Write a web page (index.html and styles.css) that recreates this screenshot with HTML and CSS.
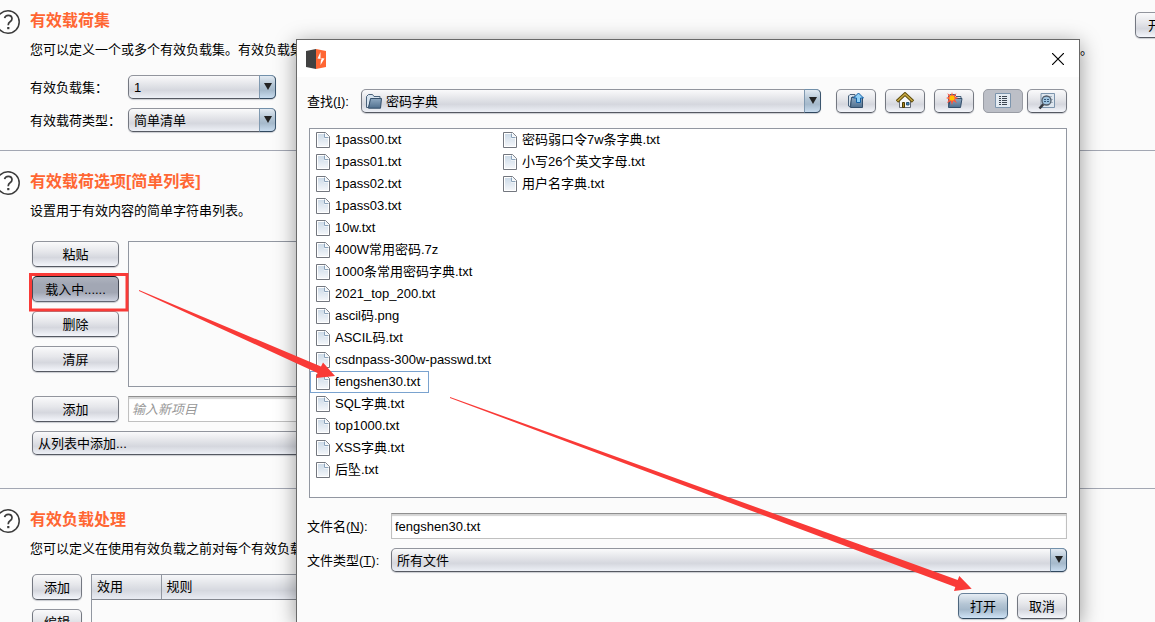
FILE: index.html
```html
<!DOCTYPE html>
<html lang="zh-CN">
<head>
<meta charset="utf-8">
<title>有效载荷</title>
<link rel="stylesheet" href="styles.css">
</head>
<body>
<svg class="defs" width="0" height="0" aria-hidden="true">
  <defs>
    <linearGradient id="paper" x1="0" y1="0" x2="0" y2="1"><stop offset="0" stop-color="#cddbe8"/><stop offset="1" stop-color="#f2f5f9"/></linearGradient>
    <linearGradient id="blue" x1="0" y1="0" x2="0" y2="1"><stop offset="0" stop-color="#8fa9c2"/><stop offset="1" stop-color="#4f6f8e"/></linearGradient>
    <symbol id="help" viewBox="0 0 24 24"><circle cx="12" cy="12" r="11.2" fill="#fff" stroke="#3c3c3c" stroke-width="1.5"/><path d="M8.600 8.200Q9.200 5.300 12.300 5.300Q16 5.300 16 8.700Q16 10.400 14 11.800Q12.200 13 12.200 15.200" fill="none" stroke="#3c3c3c" stroke-width="1.700"/><rect x="11.200" y="17" width="2.200" height="2.200" fill="#3c3c3c"/></symbol>
    <symbol id="file" viewBox="0 0 14 16"><path d="M.5.5H9.500L13.500 4.500V15.500H.5Z" fill="#fff" stroke="#73777f"/><path d="M2 2H8V6.500H12V14H2Z" fill="url(#paper)"/><path d="M8.500 1.500V5.500H12.500" fill="none" stroke="#8aa2ba"/><path d="M9.500 1V4.500H13Z" fill="#eef3f8"/></symbol>
    <symbol id="folder" viewBox="0 0 16 16"><path d="M.5 14.500V3.500L2.500 1.500H6.500L8 3.500H14V6H5L2.500 14.500Z" fill="#d6e3ef" stroke="#49617a"/><path d="M4.500 5.500H15.500L14.500 15.200H2.500Z" fill="url(#blue)" stroke="#344f6b"/></symbol>
  </defs>
</svg>
<main class="page">
  <section class="section">
    <svg class="help"><use href="#help"/></svg>
    <div class="content">
      <h2>有效载荷集</h2>
      <p class="desc split"><span>您可以定义一个或多个有效负载集。有效负载集</span><span>。</span></p>
      <div class="form">
        <label for="set">有效负载集：</label>
        <span class="combo"><select id="set"><option>1</option></select></span>
        <label for="type">有效载荷类型：</label>
        <span class="combo"><select id="type"><option>简单清单</option></select></span>
      </div>
    </div>
    <button class="btn start" type="button">开</button>
  </section>
  <section class="section">
    <svg class="help"><use href="#help"/></svg>
    <div class="content">
      <h2>有效载荷选项[简单列表]</h2>
      <p class="desc">设置用于有效内容的简单字符串列表。</p>
      <div class="options">
        <div class="stack">
          <button class="btn" type="button">粘贴</button>
          <button class="btn pressed" type="button">载入中......</button>
          <button class="btn" type="button">删除</button>
          <button class="btn" type="button">清屏</button>
        </div>
        <div class="listbox"></div>
        <button class="btn" type="button">添加</button>
        <input class="field" type="text" placeholder="输入新项目" aria-label="输入新项目">
        <span class="combo wide"><select aria-label="从列表中添加"><option>从列表中添加...</option></select></span>
      </div>
    </div>
  </section>
  <section class="section">
    <svg class="help"><use href="#help"/></svg>
    <div class="content">
      <h2>有效负载处理</h2>
      <p class="desc">您可以定义在使用有效负载之前对每个有效负载</p>
      <div class="rules">
        <div class="stack">
          <button class="btn" type="button">添加</button>
          <button class="btn" type="button">编辑</button>
        </div>
        <div class="rulebox"><table><thead><tr><th class="used">效用</th><th>规则</th></tr></thead></table></div>
      </div>
    </div>
  </section>
</main>

<div class="dialog" role="dialog" aria-label="打开">
  <header class="titlebar">
    <svg width="20" height="20" viewBox="0 0 20 20"><path d="M0 2L10 0V20L0 18Z" fill="#414141"/><path d="M10 0L20 2V18L10 20Z" fill="#ff6633"/><path d="M14.500 3L11.500 9.500L15 10L14.500 16L18.500 9.500L14.500 9Z" fill="#fff"/><path d="M14 9.500H16L14.500 12Z" fill="#ff6633"/></svg>
    <button class="close" type="button" aria-label="关闭"><svg width="12" height="12" viewBox="0 0 12 12"><path d="M0 0L12 12M12 0L0 12" stroke="#000" stroke-width="1.200"/></svg></button>
  </header>
  <div class="chooser">
    <div class="lookup">
      <label for="dir">查找(<u>I</u>):</label>
      <span class="combo dir"><svg class="diricon"><use href="#folder"/></svg><select id="dir"><option>密码字典</option></select></span>
      <div class="tools">
        <button class="btn tool" type="button" aria-label="上一级"><svg width="18" height="18" viewBox="0 0 18 18"><path d="M1.500 14V4L3 2.500H8V5H5L3 15Z" fill="#d6e3ef" stroke="#49617a"/><path d="M4.500 5.500H15.500V15.500H3.500Z" fill="url(#blue)" stroke="#344f6b"/><path d="M11.500 1L16.500 6H13.500V10.500H9.500V6H6.500Z" fill="#8fd0f7" stroke="#1460a5"/></svg></button>
        <button class="btn tool" type="button" aria-label="主目录"><svg width="18" height="18" viewBox="0 0 18 18"><path d="M3.500 8.500L9 3L14.500 8.500V15.500H3.500Z" fill="#f7f8fa" stroke="#656b76"/><path d="M1 9.500L9 2L17 9.500" fill="none" stroke="#5c4a08" stroke-width="3.400"/><path d="M1.500 9L9 2L16.500 9" fill="none" stroke="#c9aa45" stroke-width="1.600"/><path d="M6.500 10.500H8.500V15.500H6.500Z" fill="#a98618" stroke="#4b3b05"/><path d="M10.500 10.500H13V13H10.500Z" fill="#3e86bc" stroke="#315775"/></svg></button>
        <button class="btn tool" type="button" aria-label="新建文件夹"><svg width="18" height="18" viewBox="0 0 18 18"><path d="M3.500 15V4L5 2.500H10L11 4.500H16V7H5Z" fill="#d6e3ef" stroke="#49617a"/><path d="M5.500 6.500H17L15.500 15.500H3.500Z" fill="url(#blue)" stroke="#344f6b"/><path d="M7 0L8 3.600L11.500 1.200L9.900 4.700L13.500 6L9.900 7.300L12 11.200L8.300 8.900L7 13L5.700 8.900L2 11.200L4 7.300L1 6L4 4.700L2.300 1.200L6 3.600Z" fill="#ff563d"/><circle cx="7" cy="6" r="2.600" fill="#ffc400"/></svg></button>
        <button class="btn tool on" type="button" aria-label="列表"><svg width="16" height="16" viewBox="0 0 16 16"><path d="M.5.5H15.500V14.500H.5Z" fill="#e4ebf2" stroke="#7d95ad"/><path d="M4 3.500H6M7 3.500H12M4 5.500H6M7 5.500H12M4 7.500H6M7 7.500H12M4 9.500H6M7 9.500H12M4 11.500H6M7 11.500H12" stroke="#3d4651"/></svg></button>
        <button class="btn tool last" type="button" aria-label="详细信息"><svg width="18" height="18" viewBox="0 0 18 18"><path d="M3 1.500H16.500V15.500H3Z" fill="#dfe7ef" stroke="#7d95ad"/><path d="M5 4.500H14M13 7.500H15M13 10.500H15" stroke="#a9b7c5"/><path d="M5.500 12L1.500 16.500" stroke="#363a40" stroke-width="2.600"/><circle cx="8.500" cy="8.500" r="4.500" fill="#9fc4e0" stroke="#525d6a" stroke-width="1.300"/><path d="M6 7.500H8M9 7.500H11M6 9.500H8M9 9.500H11" stroke="#365a7b"/></svg></button>
      </div>
    </div>
    <ul class="files">
      <li><svg><use href="#file"/></svg>1pass00.txt</li>
      <li><svg><use href="#file"/></svg>1pass01.txt</li>
      <li><svg><use href="#file"/></svg>1pass02.txt</li>
      <li><svg><use href="#file"/></svg>1pass03.txt</li>
      <li><svg><use href="#file"/></svg>10w.txt</li>
      <li><svg><use href="#file"/></svg>400W常用密码.7z</li>
      <li><svg><use href="#file"/></svg>1000条常用密码字典.txt</li>
      <li><svg><use href="#file"/></svg>2021_top_200.txt</li>
      <li><svg><use href="#file"/></svg>ascil码.png</li>
      <li><svg><use href="#file"/></svg>ASCIL码.txt</li>
      <li><svg><use href="#file"/></svg>csdnpass-300w-passwd.txt</li>
      <li class="selected"><svg><use href="#file"/></svg>fengshen30.txt</li>
      <li><svg><use href="#file"/></svg>SQL字典.txt</li>
      <li><svg><use href="#file"/></svg>top1000.txt</li>
      <li><svg><use href="#file"/></svg>XSS字典.txt</li>
      <li><svg><use href="#file"/></svg>后坠.txt</li>
      <li><svg><use href="#file"/></svg>密码弱口令7w条字典.txt</li>
      <li><svg><use href="#file"/></svg>小写26个英文字母.txt</li>
      <li><svg><use href="#file"/></svg>用户名字典.txt</li>
    </ul>
    <div class="names">
      <label for="fname">文件名(<u>N</u>):</label>
      <input class="field" id="fname" type="text" value="fengshen30.txt">
      <label for="ftype">文件类型(<u>T</u>):</label>
      <span class="combo"><select id="ftype"><option>所有文件</option></select></span>
    </div>
    <div class="actions">
      <button class="btn primary" type="button">打开</button>
      <button class="btn" type="button">取消</button>
    </div>
  </div>
</div>

<svg class="marks" aria-hidden="true">
  <rect x="30.500" y="274.500" width="96.500" height="35.500" fill="none" stroke="#f93a37" stroke-width="3"/>
  <path d="M139 290L321 366.500L323 362.500L335 376L316 378L317.500 373L139 291Z" fill="#f93a37"/>
  <path d="M450 397L860 544.500L957.700 580L959.300 576L971.700 588.700L954 591L955.300 587L860 551.500L450 398Z" fill="#f93a37"/>
</svg>
</body>
</html>
```
FILE: styles.css
```css
*, *::before, *::after { box-sizing: border-box; }

body {
  margin: 0;
  height: 100vh;
  overflow: hidden;
  position: relative;
  background: #fbfbfb;
  color: #000;
  font: 13px/20px "Liberation Sans", "Noto Sans CJK SC", sans-serif;
}

button, input, select { font: inherit; color: inherit; margin: 0; }
.defs { position: absolute; }

/* Payload page */
.page { height: 100%; overflow: hidden; }
.section {
  display: grid;
  grid-template-columns: 30px 1fr 20px;
  padding: 20px 0 33px;
  border-bottom: 1px solid #a3a7b3;
}
.section:first-child { padding: 10px 0 18px; }
.section:last-child { border: 0; }
.help { width: 24px; height: 24px; margin-left: -4px; }
h2 { margin: 0 0 7px; font-size: 16px; line-height: 22px; font-weight: 700; color: #ff6633; }
.desc { margin: 0; line-height: 22px; white-space: nowrap; }
.split { display: flex; justify-content: space-between; padding-right: 42px; }

.form {
  display: grid;
  grid-template-columns: 98px 148px;
  gap: 9px 0;
  align-items: center;
  margin-top: 14px;
}
.options {
  display: grid;
  grid-template-columns: 87px 1fr;
  gap: 9px;
  margin: 19px 100px 0 2px;
}
.stack { display: flex; flex-direction: column; gap: 9px; }
.listbox { border: 1px solid #9297a1; min-height: 146px; }
.wide { grid-column: 1 / -1; }

.rules {
  display: grid;
  grid-template-columns: 50px 1fr;
  gap: 9px;
  margin: 14px 100px 0 2px;
}
.rulebox { border: 1px solid #9297a1; min-height: 80px; }
.rulebox table { width: 100%; border-collapse: collapse; }
.rulebox th {
  height: 24px;
  padding: 0 5px;
  text-align: left;
  font-weight: 400;
  background: linear-gradient(#f6f7f9, #dfe1e6 45%, #d5d8df 65%, #e9ecf3);
  border-bottom: 1px solid #83878f;
}
.rulebox .used { width: 69px; border-right: 1px solid #9297a1; }

/* Controls */
.form label, .lookup label, .names label { padding-top: 2px; }
.btn {
  height: 26px;
  padding: 2px 0 0;
  border: 1px solid;
  border-color: #92959d #747881 #555962;
  border-radius: 5px;
  background: linear-gradient(#fafafb, #e6e7eb 40%, #d5d7de 65%, #f4f6fb);
  box-shadow: 0 1px 1px #c9cbd0;
  line-height: 20px;
  white-space: nowrap;
}
.start { width: 87px; margin-top: 2px; padding-left: 12px; text-align: left; }
.pressed {
  border-color: #17191f #454a55 #626773;
  background: linear-gradient(#aeb3bf, #a2a7b4 30%, #a2a7b4 65%, #ccd1df);
}
.primary {
  border-color: #68819a #4c657d #2f475e;
  background: linear-gradient(#e6edf4, #b4c5d4 42%, #a5b9cb 65%, #cfe3f6);
}

.combo { position: relative; display: block; height: 24px; }
.combo select {
  display: block;
  width: 100%;
  height: 24px;
  padding: 2px 22px 0 5px;
  appearance: none;
  border: 1px solid;
  border-color: #92959d #747881 #555962;
  border-radius: 5px;
  background: linear-gradient(#fafafb, #e6e7eb 35%, #d5d7de 65%, #edf0f6);
  box-shadow: 0 1px 1px #c9cbd0;
  line-height: 20px;
}
.combo::before {
  content: "";
  position: absolute;
  top: 0;
  right: 0;
  width: 17px;
  height: 24px;
  border: 1px solid;
  border-color: #7290aa #3b566f #2f475e #8099b0;
  border-radius: 0 5px 5px 0;
  background: linear-gradient(#e2eaf2, #b2c4d4 42%, #a5b9cb 65%, #c8dcef);
  pointer-events: none;
}
.combo::after {
  content: "";
  position: absolute;
  top: 8px;
  right: 4px;
  border: 4px solid transparent;
  border-top: 7px solid #222;
  border-bottom: 0;
  pointer-events: none;
}

.field {
  width: 100%;
  height: 26px;
  padding: 0 3px;
  border: 1px solid #c0c0c0;
  border-top: 1px solid #8f8f8f;
  border-radius: 0;
  background: #fff;
  box-shadow: inset 0 2px 1px #d4d4d4;
}
.field::placeholder { color: #999; font-style: italic; opacity: 1; }

/* File chooser window */
.dialog {
  position: absolute;
  top: 39px;
  left: 296px;
  right: 75px;
  bottom: 0;
  border: 1px solid #696969;
  border-bottom: 0;
  background: #fbfbfb;
  box-shadow: 0 4px 20px rgba(0, 0, 0, .4);
}
.titlebar {
  display: flex;
  align-items: center;
  justify-content: space-between;
  height: 37px;
  padding: 0 9px;
  background: #fff;
}
.titlebar svg { display: block; }
.close { padding: 6px; border: 0; background: none; }
.chooser { padding: 12px 12px 0 10px; }
.lookup { display: grid; grid-template-columns: 54px 1fr auto; align-items: center; }
.diricon { position: absolute; left: 5px; top: 4px; width: 16px; height: 16px; z-index: 1; }
.dir select { padding-left: 24px; }
.tools { display: flex; gap: 9px; margin-left: 15px; }
.tool { display: flex; align-items: center; justify-content: center; width: 40px; height: 24px; padding: 0; }
.last { margin-left: -5px; }
.on { border-color: #999ca4; background: #bcbfc7; box-shadow: none; }

.files {
  display: grid;
  grid-auto-flow: column;
  grid-template-rows: repeat(16, 22px);
  grid-auto-columns: 187px;
  min-height: 370px;
  margin: 15px 0 0 2px;
  padding: 0;
  border: 1px solid #9297a1;
  background: #fff;
  list-style: none;
}
.files li {
  display: flex;
  align-items: center;
  justify-self: start;
  gap: 5px;
  padding: 0 8px 0 5px;
  border: 1px solid transparent;
  white-space: nowrap;
}
.files .selected { border-color: #7aa3cf; }
.files svg { width: 14px; height: 16px; }

.names {
  display: grid;
  grid-template-columns: 84px 1fr;
  gap: 9px 0;
  align-items: center;
  margin-top: 15px;
}
.actions { display: flex; justify-content: flex-end; gap: 9px; margin-top: 21px; }
.actions .btn { width: 50px; }

.marks { position: absolute; inset: 0; width: 100%; height: 100%; pointer-events: none; }
```
